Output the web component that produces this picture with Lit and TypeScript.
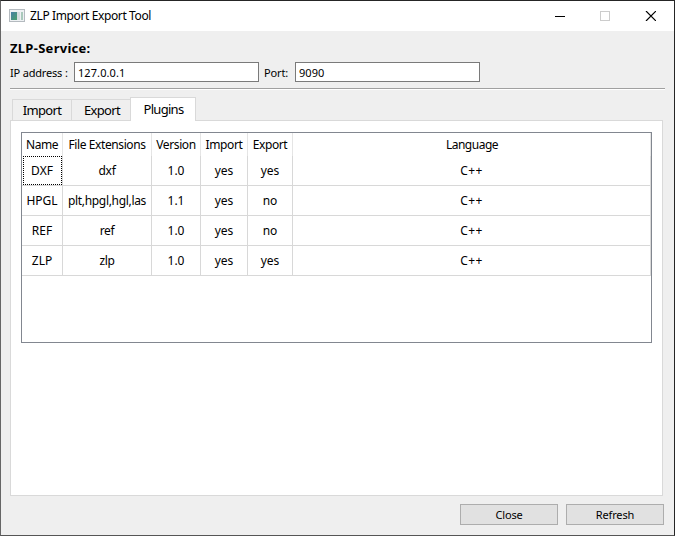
import { LitElement, html, css } from "lit";
import { customElement } from "lit/decorators.js";

const COLUMNS = [
  { key: "name", label: "Name" },
  { key: "ext", label: "File Extensions" },
  { key: "version", label: "Version" },
  { key: "imp", label: "Import" },
  { key: "exp", label: "Export" },
  { key: "lang", label: "Language" },
] as const;

const PLUGINS = [
  { name: "DXF", ext: "dxf", version: "1.0", imp: "yes", exp: "yes", lang: "C++" },
  { name: "HPGL", ext: "plt,hpgl,hgl,las", version: "1.1", imp: "yes", exp: "no", lang: "C++" },
  { name: "REF", ext: "ref", version: "1.0", imp: "yes", exp: "no", lang: "C++" },
  { name: "ZLP", ext: "zlp", version: "1.0", imp: "yes", exp: "yes", lang: "C++" },
];

@customElement("plugin-table")
class PluginTable extends LitElement {
  static styles = css`
    :host {
      display: block;
      box-sizing: border-box;
      height: 211px;
      border: 1px solid #828790;
      background: #fff;
      font: 12px/16px "Noto Sans", "Open Sans", sans-serif;
      color: #000;
    }
    .row {
      display: grid;
      grid-template-columns: 41px 89px 49px 47px 45px 358px;
      height: 30px;
    }
    .head { height: 23px; }
    .cell {
      box-sizing: border-box;
      border-right: 1px solid #d8d8d8;
      border-bottom: 1px solid #d8d8d8;
      display: flex;
      align-items: center;
      justify-content: center;
      white-space: pre;
    }
    .head .cell { border-bottom: 0; border-right-color: #e5e5e5; padding-top: 1px; letter-spacing: -0.4px; }
    .focus {
      width: 39px;
      height: 29px;
      box-sizing: border-box;
      border: 1px dotted #000;
      display: flex;
      align-items: center;
      justify-content: center;
    }
    .t { display: block; }
    .ext { letter-spacing: -0.32px; }
    .h-name { letter-spacing: -0.5px; }
    .h-lang { letter-spacing: -0.5px; padding-left: 1px; }
    .lang { letter-spacing: 0.4px; }
  `;
  render() {
    return html`
      <div class="row head">
        ${COLUMNS.map((c) => html`<div class="cell"><span class="t h-${c.key}">${c.label}</span></div>`)}
      </div>
      ${PLUGINS.map(
        (p, i) => html`<div class="row">
          ${COLUMNS.map((c, j) => {
            const text = html`<span class="t ${c.key}">${p[c.key]}</span>`;
            return html`<div class="cell">${i === 0 && j === 0 ? html`<div class="focus">${text}</div>` : text}</div>`;
          })}
        </div>`
      )}
    `;
  }
}

@customElement("app-root")
class AppRoot extends LitElement {
  static styles = css`
    :host {
      display: flex;
      flex-direction: column;
      box-sizing: border-box;
      width: 675px;
      height: 536px;
      border: 1px solid #252525;
      border-left-color: #666;
      border-bottom-color: #555;
      background: #efefef;
      color: #000;
      font: 11px/14px "Noto Sans", "Open Sans", sans-serif;
      white-space: nowrap;
    }
    .titlebar { display: flex; align-items: center; height: 30px; background: #fff; }
    .app-icon { margin: 0 5px 1px 8px; flex: none; }
    .title { font-size: 12px; line-height: 16px; flex: 1; letter-spacing: -0.38px; }
    .win { flex: none; margin-right: 18px; margin-bottom: 1px; }
    .service { font-size: 13px; line-height: 16px; font-weight: 700; margin: 9px 0 0 9px; letter-spacing: 0.28px; }
    .fields { display: flex; align-items: center; height: 20px; margin: 6px 0 0 9px; }
    .ip { width: 64px; letter-spacing: -0.18px; padding-top: 1px; }
    .port { width: 31px; margin-left: 5px; letter-spacing: -0.15px; padding-top: 1px; }
    .input {
      box-sizing: border-box;
      width: 185px;
      height: 20px;
      border: 1px solid #7a7a7a;
      background: #fff;
      padding: 3px 3px 0;
      letter-spacing: 0.08px;
    }
    .rule { height: 1px; margin: 6px 9px 0 9px; background: #a0a0a0; border-bottom: 1px solid #fff; }
    .tabs { display: flex; align-items: flex-end; height: 24px; margin: 7px 0 0 11px; position: relative; }
    .tab {
      box-sizing: border-box;
      border: 1px solid #d9d9d9;
      border-right: 0;
      height: 22px;
      font-size: 13px;
      line-height: 21px;
      letter-spacing: -0.7px;
      text-align: center;
    }
    .import { width: 59px; }
    .export { width: 59px; padding-left: 2px; }
    .active {
      width: 66px;
      height: 24px;
      line-height: 23px;
      background: #fff;
      border-right: 1px solid #d9d9d9;
      border-bottom: 0;
      padding-left: 1px;
    }
    .pane {
      box-sizing: border-box;
      width: 653px;
      height: 376px;
      margin: -1px 0 0 9px;
      border: 1px solid #d9d9d9;
      background: #fff;
      padding: 11px 10px 0;
    }
    .actions { display: flex; justify-content: flex-end; gap: 8px; margin: 8px 10px 0 0; }
    .btn {
      box-sizing: border-box;
      width: 98px;
      height: 21px;
      border: 1px solid #adadad;
      background: #e1e1e1;
      text-align: center;
      line-height: 20px;
      letter-spacing: -0.15px;
    }
  `;
  render() {
    return html`
      <div class="titlebar">
        <svg class="app-icon" width="16" height="13" viewBox="0 0 16 13">
          <defs>
            <linearGradient id="screen" x1="0" y1="0" x2="1" y2="1">
              <stop offset="0" stop-color="#477fa6" />
              <stop offset="1" stop-color="#4aa06b" />
            </linearGradient>
          </defs>
          <rect x="0.5" y="0.5" width="15" height="12" fill="#eef1f3" stroke="#b4babf" />
          <rect x="2" y="3" width="6" height="8" fill="url(#screen)" />
          <rect x="8" y="3" width="3" height="8" fill="#d5dcdf" />
          <rect x="12" y="3" width="2" height="8" fill="#a9c9bb" />
        </svg>
        <span class="title">ZLP Import Export Tool</span>
        <svg class="win" width="101" height="10" viewBox="0 0 101 10" fill="none">
          <path d="M0 5.5H10" stroke="#000" />
          <rect x="45.5" y="0.5" width="9" height="9" stroke="#ccc" />
          <path d="M91 0L101 10M101 0L91 10" stroke="#000" stroke-width="1.2" />
        </svg>
      </div>
      <div class="service"><span>ZLP-Service:</span></div>
      <div class="fields">
        <span class="ip">IP address :</span><div class="input">127.0.0.1</div>
        <span class="port">Port:</span><div class="input">9090</div>
      </div>
      <div class="rule"></div>
      <div class="tabs">
        <div class="tab import">Import</div>
        <div class="tab export">Export</div>
        <div class="tab active">Plugins</div>
      </div>
      <div class="pane"><plugin-table></plugin-table></div>
      <div class="actions"><div class="btn">Close</div><div class="btn">Refresh</div></div>
    `;
  }
}
